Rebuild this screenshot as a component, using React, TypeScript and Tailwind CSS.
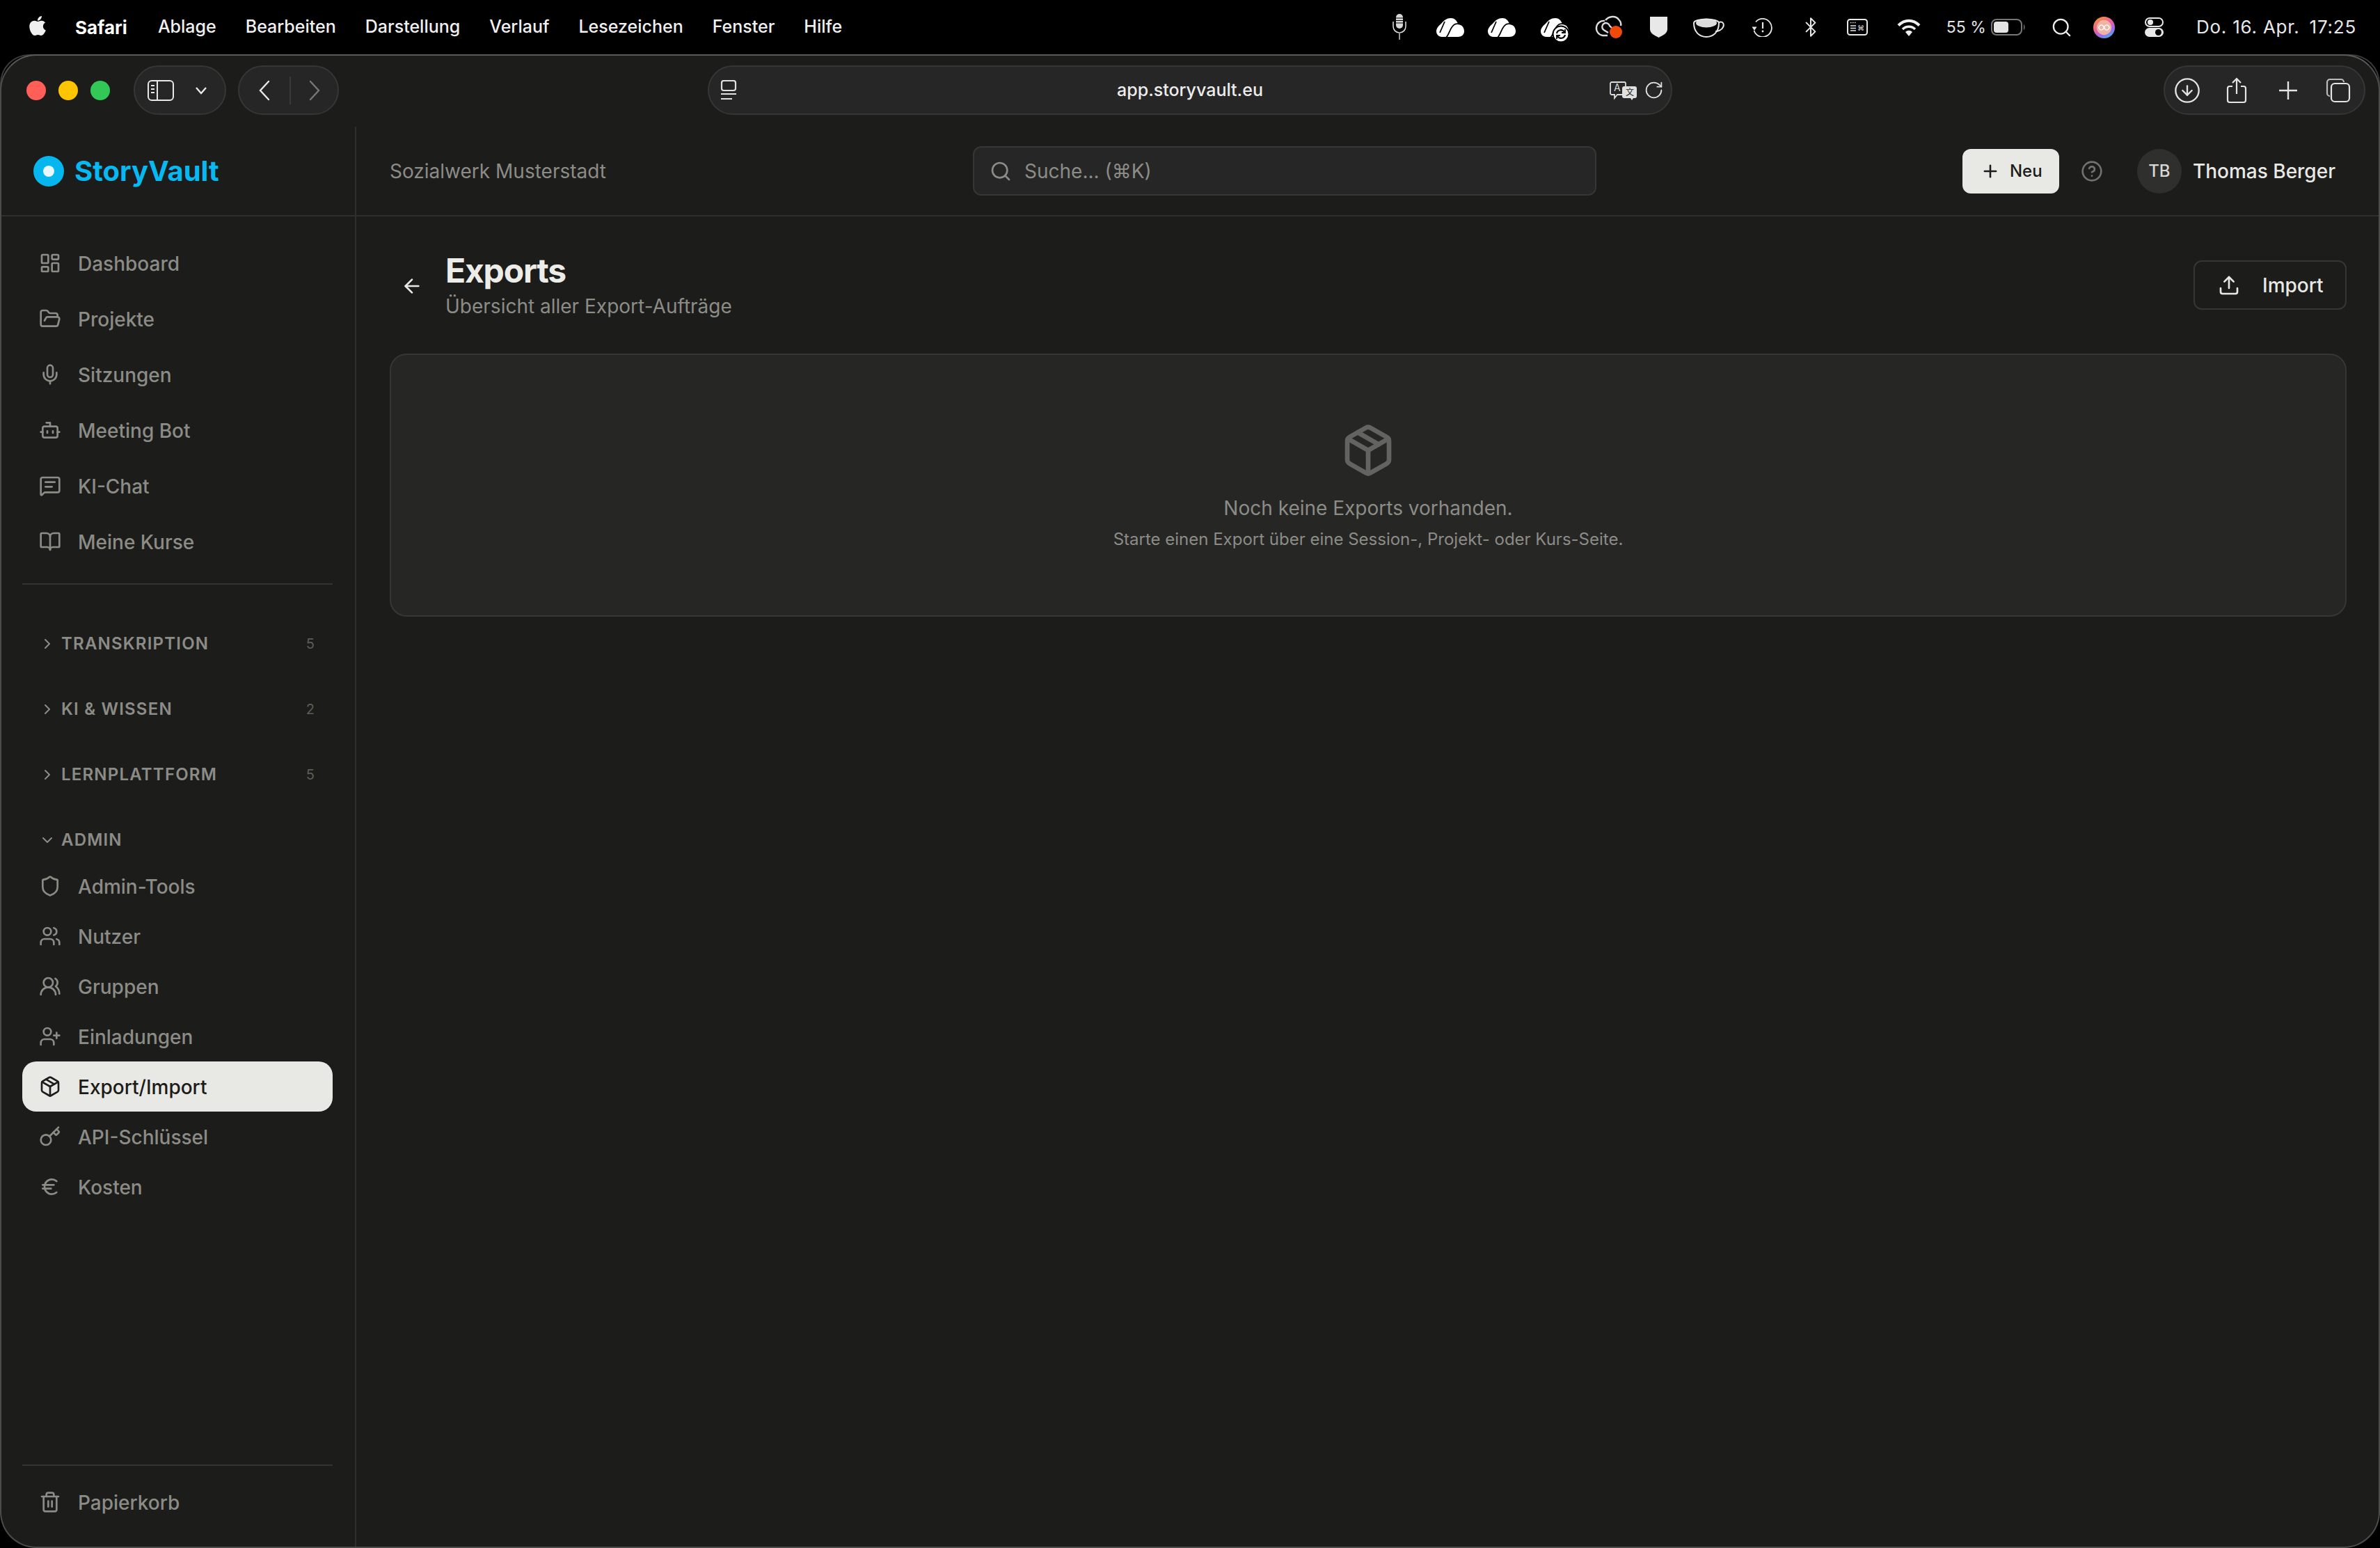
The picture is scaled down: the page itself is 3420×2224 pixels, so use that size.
import React from "react";
import {
  LayoutDashboard, FolderOpen, Mic, Bot, BookOpen, Shield, Users, UsersRound, UserPlus,
  Package, Key, Euro, Trash2, ChevronRight, ChevronDown, Search, Plus, CircleHelp, Upload, ArrowLeft,
  RotateCw, CircleArrowDown,
} from "lucide-react";
import { FaApple } from "react-icons/fa";

const ChatIcon = ({ size = 32 }: { size?: number }) => (
  <svg width={size} height={size} viewBox="0 0 24 24" fill="none" stroke="currentColor" strokeWidth="2" strokeLinecap="round" strokeLinejoin="round">
    <path d="M22 17a2 2 0 0 1-2 2H6.8a2 2 0 0 0-1.4.6l-2.2 2.2a.7.7 0 0 1-1.2-.5V5a2 2 0 0 1 2-2h16a2 2 0 0 1 2 2z" />
    <path d="M7 8h10" />
    <path d="M7 13h7" />
  </svg>
);

const CloudIcon = ({ sync = false }: { sync?: boolean }) => (
  <svg viewBox="0 0 40 27" className="w-[40px] h-[27px] overflow-visible">
    <path d="M8 27C3 27 0 23 0 19C0 15 3 11 7 8C11 3 15 0 21 0C26 0 29 3 31 8C36 9 40 13 40 19C40 24 36 27 31 27z" fill="#fff" />
    <path d="M12 5L5 21" stroke="#000" strokeWidth="1.800" fill="none" />
    <path d="M14 28C18 24 19 17 23 12C26 8 31 7 37 10" stroke="#000" strokeWidth="1.800" fill="none" />
    {sync && (
      <g>
        <circle cx="29" cy="23" r="11.500" fill="#fff" stroke="#000" strokeWidth="2" />
        <path d="M23 22a6 6 0 0 1 11-2M35 24a6 6 0 0 1-11 2" stroke="#000" strokeWidth="2.200" fill="none" />
        <path d="M35 16v5h-5M23 30v-5h5" stroke="#000" strokeWidth="1.800" fill="none" />
      </g>
    )}
  </svg>
);

const StatusIcons = () => (
  <div className="flex items-center h-full">
    <div className="w-[74px] flex justify-center">
      <svg viewBox="0 0 24 38" className="w-[24px] h-[38px]">
        <rect x="7" y="0" width="10" height="21" rx="5" fill="#d8d8d8" />
        <path d="M7 6h10M7 9.5h10M7 13h10" stroke="#000" strokeWidth="1.1" />
        <path d="M3 11v7a9 9 0 0 0 18 0v-7" stroke="#e4e4e4" strokeWidth="1.5" fill="none" />
        <path d="M12 26v11" stroke="#999" strokeWidth="2" />
      </svg>
    </div>
    <div className="w-[73px] flex justify-center"><CloudIcon /></div>
    <div className="w-[74px] flex justify-center"><CloudIcon /></div>
    <div className="w-[78px] flex justify-center"><CloudIcon sync /></div>
    <div className="w-[78px] flex justify-center">
      <svg viewBox="0 0 40 34" className="w-[40px] h-[34px]">
        <path d="M18 29H11A10.500 10.500 0 1 1 14 8" stroke="#dcdcdc" strokeWidth="2.400" fill="none" />
        <path d="M19 25L12.500 21A5.500 5.500 0 1 1 21 15L27 21" stroke="#dcdcdc" strokeWidth="2.400" fill="none" />
        <path d="M15 7C20 1 30 0 34 6C36 8 38 11 37 15" stroke="#dcdcdc" strokeWidth="2.400" fill="none" />
        <circle cx="30" cy="24" r="9" fill="#f04a0a" />
      </svg>
    </div>
    <div className="w-[66px] flex justify-center">
      <svg viewBox="0 0 25 30" className="w-[25px] h-[30px]">
        <path d="M0 0H25V18C25 24 18 27 12.500 30C7 27 0 24 0 18z" fill="#e8e8e8" />
      </svg>
    </div>
    <div className="w-[76px] flex justify-center">
      <svg viewBox="0 0 46 30" className="w-[46px] h-[30px]">
        <ellipse cx="20" cy="9" rx="15" ry="6.500" fill="#dcdcdc" />
        <path d="M2 9C2 2 38 2 38 9C38 22 30 29 20 29C10 29 2 22 2 9z" stroke="#e8e8e8" strokeWidth="2" fill="none" />
        <path d="M38 8C44 6 46 11 44 15C42 19 37 21 33 21" stroke="#e8e8e8" strokeWidth="2" fill="none" />
      </svg>
    </div>
    <div className="w-[78px] flex justify-center">
      <svg viewBox="0 0 30 28" className="w-[30px] h-[28px]">
        <path d="M6 6.500A13 13 0 1 1 3.500 19" stroke="#e8e8e8" strokeWidth="1.800" fill="none" />
        <path d="M0.500 13.500H7.500L4 19z" fill="#e8e8e8" />
        <path d="M16 7v9" stroke="#e8e8e8" strokeWidth="2.200" />
        <circle cx="16" cy="20" r="1.400" fill="#e8e8e8" />
      </svg>
    </div>
    <div className="w-[62px] flex justify-center">
      <svg viewBox="5 1 14 22" className="w-[18px] h-[28px]" fill="none" stroke="#e8e8e8" strokeWidth="1.600" strokeLinecap="round" strokeLinejoin="round">
        <path d="m7 7 10 10-5 5V2l5 5L7 17" />
      </svg>
    </div>
    <div className="w-[72px] flex justify-center">
      <svg viewBox="0 0 30 24" className="w-[30px] h-[24px]">
        <rect x="1" y="1" width="28" height="22" rx="3.500" stroke="#e8e8e8" strokeWidth="2" fill="none" />
        <path d="M5 5.500h1.500M8 5.500h1.500M11 5.500h1.500" stroke="#e8e8e8" strokeWidth="1.500" />
        <path d="M5 10h8M5 13.500h8M5 17h8" stroke="#e8e8e8" strokeWidth="1.500" />
        <text x="15" y="17" fontSize="10" fill="#e8e8e8" fontFamily="DejaVu Sans">⌘</text>
      </svg>
    </div>
    <div className="w-[76px] flex justify-center">
      <svg viewBox="0 0 34 25" className="w-[34px] h-[25px]">
        <path d="M2 9.500C11 0.500 23 0.500 32 9.500" stroke="#eee" strokeWidth="4" fill="none" />
        <path d="M8 15C13 10 21 10 26 15" stroke="#eee" strokeWidth="3.500" fill="none" />
        <path d="M12 19C15 16 19 16 22 19L17 25z" fill="#eee" />
      </svg>
    </div>
    <span className="ml-[16px] text-[23px] leading-none text-[#e4e4e4]">55 %</span>
    <div className="ml-[7px] flex items-center">
      <svg viewBox="0 0 50 24" className="w-[50px] h-[24px]">
        <rect x="1" y="1" width="43" height="22" rx="7" stroke="#767676" strokeWidth="2" fill="none" />
        <rect x="4" y="4" width="21" height="16" rx="4" fill="#e4e4e4" />
        <path d="M47 8C49 9 49 15 47 16z" fill="#767676" />
      </svg>
    </div>
    <div className="ml-[32px] w-[40px] flex justify-center text-[#eee]">
      <Search size={31} strokeWidth={1.8} />
    </div>
    <div className="ml-[21px] w-[40px] flex justify-center">
      <svg viewBox="0 0 32 32" className="w-[31px] h-[31px]">
        <defs>
          <linearGradient id="siri" x1="0.150" y1="0" x2="0.750" y2="1">
            <stop offset="0" stopColor="#f59a2e" />
            <stop offset="0.450" stopColor="#ee5fa0" />
            <stop offset="0.750" stopColor="#9a6cf0" />
            <stop offset="1" stopColor="#3fb4f5" />
          </linearGradient>
        </defs>
        <circle cx="16" cy="16" r="16" fill="url(#siri)" />
        <circle cx="16" cy="16" r="11" fill="#f0b3a4" />
        <path d="M8 16c2-5 6-5 8 0s6 5 8 0c-2-5-6-5-8 0s-6 5-8 0z" stroke="#fff" strokeWidth="1.500" fill="none" />
      </svg>
    </div>
    <div className="ml-[32px] w-[40px] flex justify-center">
      <svg viewBox="0 0 27 28" className="w-[27px] h-[28px]">
        <rect x="1" y="1" width="25" height="12" rx="6" stroke="#e8e8e8" strokeWidth="2" fill="none" />
        <circle cx="8" cy="7" r="4" fill="#e8e8e8" />
        <rect x="0" y="15" width="27" height="13" rx="6.500" fill="#e8e8e8" />
        <circle cx="19.500" cy="21.500" r="4.500" fill="#000" />
      </svg>
    </div>
    <div className="ml-[40px] flex gap-[14px] text-[26px] leading-none tracking-[0.03em] text-[#e8e8e8]">
      <span>Do. 16. Apr.</span>
      <span>17:25</span>
    </div>
  </div>
);

const MenuBar = () => (
  <div className="h-[78px] shrink-0 flex items-center justify-between pr-[34px] text-white">
    <div className="flex items-center pl-[41px]">
      <FaApple className="w-[26px] h-[32px] text-[#f0f0f0] -mt-[4px]" />
      <span className="ml-[41px] text-[26px] font-bold">Safari</span>
      <div className="ml-[44px] flex gap-[42px] text-[25px] font-medium text-[#f0f0f0]">
        <span>Ablage</span>
        <span>Bearbeiten</span>
        <span>Darstellung</span>
        <span>Verlauf</span>
        <span>Lesezeichen</span>
        <span>Fenster</span>
        <span>Hilfe</span>
      </div>
    </div>
    <StatusIcons />
  </div>
);

const Pill = ({ className, children }: { className: string; children: React.ReactNode }) => (
  <div className={`h-[71px] rounded-[36px] border-2 border-[#363636] bg-[#262626] ${className}`}>{children}</div>
);

const Toolbar = () => (
  <div className="h-[102px] shrink-0 flex items-start pt-[14px]">
    <div className="ml-[36px] h-[71px] flex items-center gap-[18px]">
      <div className="w-[28px] h-[28px] rounded-full bg-[#ff5f57]" />
      <div className="w-[28px] h-[28px] rounded-full bg-[#fdc500]" />
      <div className="w-[28px] h-[28px] rounded-full bg-[#33c758]" />
    </div>
    <Pill className="ml-[34px] w-[133px] flex items-center pl-[18px]">
      <svg viewBox="0 0 38 30" className="w-[38px] h-[30px]">
        <rect x="1" y="1" width="36" height="28" rx="5" stroke="#e8e8e8" strokeWidth="2" fill="none" />
        <path d="M14 1v28" stroke="#e8e8e8" strokeWidth="2" />
        <path d="M5 8h5M5 13h5M5 18h5" stroke="#e8e8e8" strokeWidth="2" />
      </svg>
      <svg viewBox="0 0 18 12" className="ml-[30px] w-[18px] h-[12px]">
        <path d="M2 2l7 8 7-8" stroke="#e8e8e8" strokeWidth="2.400" fill="none" />
      </svg>
    </Pill>
    <Pill className="ml-[17px] w-[145px] flex items-center">
      <div className="w-[72px] flex justify-center">
        <svg viewBox="0 0 18 30" className="w-[18px] h-[30px]">
          <path d="M15 2L3 15l12 13" stroke="#e8e8e8" strokeWidth="2.400" fill="none" strokeLinecap="round" />
        </svg>
      </div>
      <div className="w-[2px] h-[40px] bg-[#3a3a3a]" />
      <div className="flex-1 flex justify-center">
        <svg viewBox="0 0 18 30" className="w-[18px] h-[30px]">
          <path d="M3 2l12 13L3 28" stroke="#777" strokeWidth="2.400" fill="none" strokeLinecap="round" />
        </svg>
      </div>
    </Pill>
    <Pill className="ml-[530px] w-[1386px] grid grid-cols-[1fr_auto_1fr] items-center px-[10px]">
      <svg viewBox="0 0 24 30" className="w-[24px] h-[30px] ml-[6px]">
        <rect x="2" y="1" width="20" height="14" rx="3" stroke="#e0e0e0" strokeWidth="2.200" fill="none" />
        <path d="M1 20h22" stroke="#e0e0e0" strokeWidth="2.200" />
        <path d="M1 27h16" stroke="#e0e0e0" strokeWidth="2.200" />
      </svg>
      <span className="pt-[1px] text-[25px] font-medium text-[#ececec]">app.storyvault.eu</span>
      <div className="flex items-center justify-end gap-[9px] text-[#e0e0e0]">
        <svg viewBox="0 0 40 28" className="w-[40px] h-[28px]">
          <path d="M3 2h18a2 2 0 0 1 2 2v14a2 2 0 0 1-2 2H11l-4 5v-5H3a2 2 0 0 1-2-2V4a2 2 0 0 1 2-2z" stroke="#ddd" strokeWidth="1.800" fill="none" />
          <text x="6" y="15" fontSize="14" fill="#ddd" fontFamily="Inter, sans-serif">A</text>
          <path d="M21 8h15a3 3 0 0 1 3 3v11a3 3 0 0 1-3 3h-2l-2 3-2-3h-9a3 3 0 0 1-3-3V11a3 3 0 0 1 3-3z" fill="#e0e0e0" />
          <text x="23" y="21" fontSize="12" fill="#222" fontFamily="Noto Sans CJK SC, sans-serif">文</text>
        </svg>
        <RotateCw size={29} strokeWidth={1.5} />
      </div>
    </Pill>
    <Pill className="ml-[706px] w-[290px] flex items-center pl-[12px] text-[#e4e4e4]">
      <CircleArrowDown size={40} strokeWidth={1.4} />
      <svg viewBox="0 0 30 38" className="ml-[36px] w-[30px] h-[38px]">
        <path d="M9 13H5a3 3 0 0 0-3 3v17a3 3 0 0 0 3 3h20a3 3 0 0 0 3-3V16a3 3 0 0 0-3-3h-4" stroke="#e4e4e4" strokeWidth="2.200" fill="none" />
        <path d="M15 24V2M9 8l6-6 6 6" stroke="#e4e4e4" strokeWidth="2.200" fill="none" />
      </svg>
      <svg viewBox="0 0 28 28" className="ml-[45px] w-[28px] h-[28px]">
        <path d="M14 1v26M1 14h26" stroke="#e4e4e4" strokeWidth="2.400" />
      </svg>
      <svg viewBox="0 0 36 36" className="ml-[40px] w-[36px] h-[36px]">
        <path d="M6 26a4 4 0 0 1-4-4V6a4 4 0 0 1 4-4h16a4 4 0 0 1 4 4" stroke="#bbb" strokeWidth="2.200" fill="none" />
        <rect x="8" y="8" width="26" height="26" rx="5" stroke="#e4e4e4" strokeWidth="2.200" fill="none" />
      </svg>
    </Pill>
  </div>
);

const NavItem = ({ icon, label, active = false }: { icon: React.ReactNode; label: string; active?: boolean }) => (
  <div
    className={
      active
        ? "h-[72px] flex items-center gap-[24px] px-[24px] rounded-[20px] bg-[#e8e8e4] text-[#1c1c1a] text-[28px] font-medium"
        : "h-[72px] flex items-center gap-[24px] px-[24px] rounded-[20px] text-[#8c8c87] text-[28px] font-medium"
    }
  >
    {icon}
    <span className="pt-[1px]">{label}</span>
  </div>
);

const Section = ({ label, count }: { label: string; count: string }) => (
  <div className="h-[48px] mb-[46px] flex items-center pl-[24px] pr-[26px] text-[#8c8c87]">
    <ChevronRight size={24} strokeWidth={2} />
    <span className="ml-[8px] text-[24px] font-semibold tracking-[0.05em]">{label}</span>
    <span className="ml-auto text-[20px] text-[#5c5c58]">{count}</span>
  </div>
);

const Sidebar = () => (
  <div className="w-[510px] shrink-0 flex flex-col border-r-2 border-[#2f2f2e]">
    <div className="h-[127px] shrink-0 flex items-center border-b-2 border-[#2f2f2e] pl-[46px] gap-[15px] box-content">
      <div className="w-[44px] h-[44px] rounded-full bg-[#06b6ef] flex items-center justify-center">
        <div className="w-[16px] h-[16px] rounded-full bg-[#e8f8fd]" />
      </div>
      <span className="text-[40px] font-bold text-[#08b8f0]">StoryVault</span>
    </div>
    <div className="flex-1 flex flex-col pl-[30px] pr-[32px] pt-[31px] pb-[28px]">
      <div className="flex flex-col gap-[8px]">
        <NavItem icon={<LayoutDashboard size={32} />} label="Dashboard" />
        <NavItem icon={<FolderOpen size={32} />} label="Projekte" />
        <NavItem icon={<Mic size={32} />} label="Sitzungen" />
        <NavItem icon={<Bot size={32} />} label="Meeting Bot" />
        <NavItem icon={<ChatIcon />} label="KI-Chat" />
        <NavItem icon={<BookOpen size={32} />} label="Meine Kurse" />
      </div>
      <div className="h-[2px] mt-[24px] mb-[61px] bg-[#333332]" />
      <Section label="TRANSKRIPTION" count="5" />
      <Section label="KI & WISSEN" count="2" />
      <Section label="LERNPLATTFORM" count="5" />
      <div className="h-[48px] mb-[6px] flex items-center pl-[24px] text-[#8c8c87]">
        <ChevronDown size={24} strokeWidth={2} />
        <span className="ml-[8px] text-[24px] font-semibold tracking-[0.05em]">ADMIN</span>
      </div>
      <NavItem icon={<Shield size={32} />} label="Admin-Tools" />
      <NavItem icon={<Users size={32} />} label="Nutzer" />
      <NavItem icon={<UsersRound size={32} />} label="Gruppen" />
      <NavItem icon={<UserPlus size={32} />} label="Einladungen" />
      <NavItem icon={<Package size={32} />} label="Export/Import" active />
      <NavItem icon={<Key size={32} />} label="API-Schlüssel" />
      <NavItem icon={<Euro size={32} />} label="Kosten" />
      <div className="mt-auto h-[2px] mb-[16px] bg-[#333332]" />
      <NavItem icon={<Trash2 size={32} />} label="Papierkorb" />
    </div>
  </div>
);

const Header = () => (
  <div className="h-[127px] shrink-0 box-content flex items-center border-b-2 border-[#2f2f2e] pl-[48px] pr-[62px]">
    <span className="w-[310px] text-[28px] text-[#8c8c87] whitespace-nowrap">Sozialwerk Musterstadt</span>
    <div className="ml-[528px] w-[896px] h-[71px] rounded-[12px] border-2 border-[#363636] bg-[#262626] flex items-center pl-[22px] gap-[18px] text-[#8c8c87]">
      <Search size={32} strokeWidth={2} />
      <span className="text-[28px]">Suche... (⌘K)</span>
    </div>
    <div className="ml-auto w-[139px] h-[64px] rounded-[12px] bg-[#e8e8e4] flex items-center pl-[26px] gap-[14px] text-[#1c1c1a]">
      <Plus size={28} strokeWidth={2.2} />
      <span className="text-[24px] font-medium">Neu</span>
    </div>
    <div className="ml-[31px] text-[#71716d]">
      <CircleHelp size={32} strokeWidth={2} />
    </div>
    <div className="ml-[49px] w-[64px] h-[64px] rounded-full bg-[#2f2f2e] flex items-center justify-center text-[24px] font-medium text-[#d8d8d4]">
      TB
    </div>
    <span className="ml-[16px] text-[28px] font-medium text-[#e8e8e4] whitespace-nowrap">Thomas Berger</span>
  </div>
);

const Main = () => (
  <div className="flex-1 min-w-0 flex flex-col">
    <Header />
    <div className="flex-1 flex flex-col pl-[48px] pr-[46px] pt-[51px]">
      <div className="flex items-center mb-[48px]">
        <div className="w-[64px] flex justify-center text-[#e8e8e4]">
          <ArrowLeft size={32} strokeWidth={2} />
        </div>
        <div className="ml-[16px] flex flex-col">
          <h1 className="text-[48px] leading-[54px] font-bold text-[#ecece8] tracking-[-0.025em]">Exports</h1>
          <p className="mt-[4px] text-[28px] leading-[40px] text-[#8c8c87]">Übersicht aller Export-Aufträge</p>
        </div>
        <div className="ml-auto w-[220px] h-[71px] -mt-[3px] rounded-[12px] border-2 border-[#363636] flex items-center pl-[33px] gap-[32px] text-[#e8e8e4]">
          <Upload size={32} strokeWidth={2} />
          <span className="text-[28px] font-medium">Import</span>
        </div>
      </div>
      <div className="h-[378px] rounded-[24px] border-2 border-[#363636] bg-[#262625] flex flex-col items-center pt-[97px]">
        <Package size={80} strokeWidth={2} className="text-[#8c8c87] opacity-60" />
        <p className="mt-[22px] text-[28px] leading-[42px] text-[#8c8c87]">Noch keine Exports vorhanden.</p>
        <p className="mt-[6px] text-[24px] leading-[36px] text-[#8c8c87]">Starte einen Export über eine Session-, Projekt- oder Kurs-Seite.</p>
      </div>
    </div>
  </div>
);

export default function App() {
  return (
    <div className="w-[3420px] h-[2224px] bg-black flex flex-col overflow-hidden font-['Inter','Noto_Sans',sans-serif]">
      <MenuBar />
      <div className="relative flex-1 min-h-0 flex flex-col">
        <div className="absolute left-0 right-0 top-0 h-[120px] rounded-t-[42px] border-2 border-b-0 border-[#3a3a3a]" />
        <div className="relative flex-1 min-h-0 flex flex-col rounded-[52px] border-2 border-[#4c4c4b] border-t-[#5a5a5a] bg-[#1c1c1b] overflow-hidden">
          <Toolbar />
          <div className="flex-1 min-h-0 flex">
            <Sidebar />
            <Main />
          </div>
        </div>
      </div>
    </div>
  );
}
